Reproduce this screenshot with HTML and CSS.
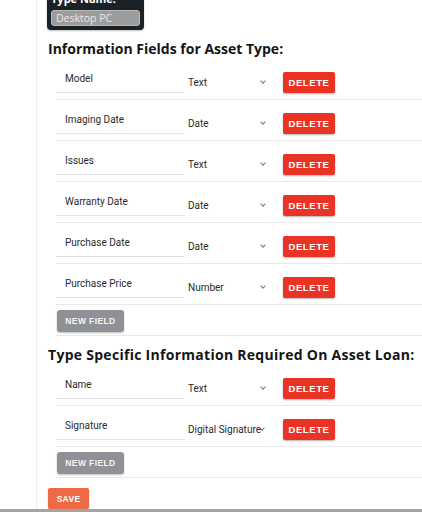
FILE: index.html
```html
<!DOCTYPE html>
<html>
<head>
<meta charset="utf-8">
<link rel="stylesheet" href="styles.css">
</head>
<body>
<div class="page">
  <div class="rail"></div>
  <main class="main">
    <div class="type-card">
      <div class="type-label">Type Name:</div>
      <div class="type-input">Desktop PC</div>
    </div>

    <h2 class="heading h1">Information Fields for Asset Type:</h2>
    <div class="fields">
      <div class="row"><div class="name">Model</div><div class="select">Text<span class="chev"></span></div><button class="del">DELETE</button></div>
      <div class="row"><div class="name">Imaging Date</div><div class="select">Date<span class="chev"></span></div><button class="del">DELETE</button></div>
      <div class="row"><div class="name">Issues</div><div class="select">Text<span class="chev"></span></div><button class="del">DELETE</button></div>
      <div class="row"><div class="name">Warranty Date</div><div class="select">Date<span class="chev"></span></div><button class="del">DELETE</button></div>
      <div class="row"><div class="name">Purchase Date</div><div class="select">Date<span class="chev"></span></div><button class="del">DELETE</button></div>
      <div class="row"><div class="name">Purchase Price</div><div class="select">Number<span class="chev"></span></div><button class="del">DELETE</button></div>
      <div class="add-row"><button class="new">NEW FIELD</button></div>
    </div>

    <h2 class="heading h2">Type Specific Information Required On Asset Loan:</h2>
    <div class="fields">
      <div class="row"><div class="name">Name</div><div class="select">Text<span class="chev"></span></div><button class="del">DELETE</button></div>
      <div class="row"><div class="name">Signature</div><div class="select">Digital Signature<span class="chev tight"></span></div><button class="del">DELETE</button></div>
      <div class="add-row"><button class="new">NEW FIELD</button></div>
    </div>

    <button class="save">SAVE</button>
  </main>
</div>
<div class="hbar"></div>
</body>
</html>
```

FILE: styles.css
```css
html, body {
  margin: 0;
  padding: 0;
  background: #fff;
  overflow: hidden;
}
body {
  font-family: Roboto, "Liberation Sans", Arial, sans-serif;
  color: #222;
}
.page {
  display: flex;
  min-height: 512px;
}
.rail {
  width: 36px;
  flex: none;
  border-right: 1px solid #ececec;
}
.main {
  flex: 1;
  padding-left: 10px;
  min-width: 0;
}
.type-card {
  width: 89px;
  margin-top: -10px;
  padding: 1px 4px 4px 4px;
  background: #1b2227;
  border-radius: 0 0 4px 4px;
  box-shadow: 0 1px 2px rgba(0,0,0,0.25);
}
.type-label {
  font-family: "Open Sans", sans-serif;
  font-weight: 700;
  font-size: 11px;
  line-height: 16px;
  color: #fff;
}
.type-input {
  margin-top: 3px;
  height: 16px;
  line-height: 14px;
  background: #9c9c9c;
  border: 1px solid #b9b9b9;
  border-radius: 3px;
  padding-left: 4px;
  font-family: "Open Sans", sans-serif;
  font-size: 10.5px;
  color: #e9e9e9;
  box-sizing: border-box;
}
.heading {
  margin: 0;
  font-family: "Open Sans", sans-serif;
  font-weight: 700;
  font-size: 14px;
  line-height: 20px;
  color: #151515;
}
.h1 { margin-top: 9px; padding-left: 1px; }
.h2 { margin-top: 9px; padding-left: 1px; letter-spacing: 0.28px; }
.fields {
  margin-left: 9px;
}
.row {
  height: 40px;
  border-bottom: 1px solid #e9e9e9;
  display: flex;
  align-items: flex-start;
}
.name {
  width: 129px;
  height: 34px;
  padding-left: 9px;
  padding-top: 14px;
  box-sizing: border-box;
  border-bottom: 1px solid #e3e3e3;
  font-size: 10px;
  line-height: 12px;
  color: #2a2a2a;
  flex: none;
}
.select {
  width: 86px;
  margin-left: 3px;
  padding-top: 18px;
  font-size: 10px;
  line-height: 12px;
  color: #2a2a2a;
  display: flex;
  align-items: center;
  position: relative;
  flex: none;
}
.chev {
  position: absolute;
  left: 73px;
  top: 20px;
  width: 3px;
  height: 3px;
  border-right: 1px solid #777;
  border-bottom: 1px solid #777;
  transform: rotate(45deg);
}
.chev.tight {
  left: 72px;
}
.del {
  margin-left: 9px;
  margin-top: 13px;
  width: 52px;
  height: 21px;
  padding: 0;
  border: none;
  border-radius: 2px;
  background: #ea3324;
  color: #fff;
  font-family: "Liberation Sans", Arial, sans-serif;
  font-weight: 700;
  font-size: 9.5px;
  letter-spacing: 0.6px;
  box-shadow: 0 1px 2px rgba(0,0,0,0.3);
  flex: none;
}
.add-row {
  height: 31px;
  border-bottom: 1px solid #e9e9e9;
  padding-top: 4px;
  box-sizing: border-box;
}
.new {
  margin-left: 1px;
  width: 67px;
  height: 22px;
  padding: 0;
  border: none;
  border-radius: 3px;
  background: #8f9197;
  color: #f4f4f4;
  font-family: "Liberation Sans", Arial, sans-serif;
  font-weight: 700;
  font-size: 8.5px;
  letter-spacing: 0.4px;
  box-shadow: 0 1px 2px rgba(0,0,0,0.25);
}
.save {
  display: block;
  margin-top: 10px;
  margin-left: 1px;
  width: 41px;
  height: 21px;
  padding: 0;
  border: none;
  border-radius: 2px;
  background: #ee6a45;
  color: #fff;
  font-family: "Liberation Sans", Arial, sans-serif;
  font-weight: 700;
  font-size: 8.5px;
  letter-spacing: 0.3px;
  box-shadow: 0 1px 2px rgba(0,0,0,0.25);
}
.hbar {
  position: fixed;
  left: 0;
  right: 0;
  bottom: 0;
  height: 3px;
  background: #a4a4a4;
}
```
